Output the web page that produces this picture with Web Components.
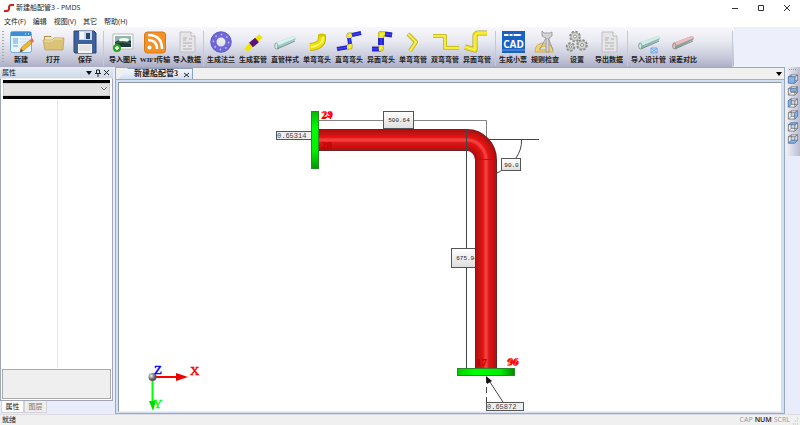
<!DOCTYPE html>
<html lang="zh-CN">
<head>
<meta charset="utf-8">
<title>新建船配管3 - PMDS</title>
<style>
html,body{margin:0;height:100%}
body{font:7px/10px "Open Sans","Noto Sans CJK SC",sans-serif;color:#222;background:#e9ecfb;overflow:hidden}
</style>
</head>
<body>
<pmds-app></pmds-app>
<script>
const base = `<style>*{box-sizing:border-box}button{font:inherit;color:inherit;border:0;background:none;padding:0;margin:0}svg{display:block}</style>`;
function define(name, html, setup) {
  customElements.define(name, class extends HTMLElement {
    constructor() {
      super();
      const t = document.createElement('template');
      t.innerHTML = base + html;
      this.attachShadow({mode: 'open'}).append(t.content.cloneNode(true));
    }
    connectedCallback() { if (setup) setup(this, this.shadowRoot); }
  });
}

const pipe = (d, w, edge, mid, hi) =>
  `<g fill="none" stroke-linejoin="round"><path d="${d}" stroke="${edge}" stroke-width="${w}"/><path d="${d}" stroke="${mid}" stroke-width="${w-1}"/><path d="${d}" stroke="${hi}" stroke-width="1"/></g>`;
const yellow = (d, w = 4) => pipe(d, w, '#aaa02a', '#e9df20', '#fff86a');
const blue = (d, w = 4) => pipe(d, w, '#3030a0', '#2222dd', '#4a4aff');
const doc = `<path d="M4 1h11l4 4v16H4z" fill="#e6e6e8" stroke="#bfbfc2"/><path d="M15 1v4h4" fill="#fafafa" stroke="#bbb"/><path d="M7 7h4M7 9h3M13 8h3M7 12h9M7 15h3M12 15h4M7 18h9" stroke="#b0b0b2"/>`;
const gear = (x, y, r) => `<circle cx="${x}" cy="${y}" r="${r}" fill="none" stroke="#8a8a88" stroke-width="2.500" stroke-dasharray="2.200 1.300"/><circle cx="${x}" cy="${y}" r="${r-.5}" fill="#d8d8d4" stroke="#a5a5a0" stroke-width=".8"/><circle cx="${x}" cy="${y}" r="${r/3}" fill="#fff" stroke="#777" stroke-width=".8"/>`;
const tube = (face, side) => `<path d="M1 12L20 5q3 1 1 4L3 18q-3-2-2-6z" fill="${side}"/><path d="M1 12L20 5q2 0 2 2L3 15z" fill="${face}"/><ellipse cx="2.300" cy="15" rx="1.600" ry="3" fill="${face}" stroke="#6d8583" stroke-width=".7"/><path d="M3 18L21 10" stroke="#76908d"/>`;
const icons = {
  new: `<rect x=".5" y=".5" width="21" height="21" rx="2" fill="#e8f4fc" stroke="#75aadb"/><path d="M1 1h20v4H1z" fill="#3e8dd3"/><path d="M15 3h1M18 3h1" stroke="#fff"/><path d="M3 8h5M3 10h5M3 12h5M3 15h5" stroke="#5ba6df"/><path d="M10 8h9M10 11h8M10 14h6" stroke="#c5dff1"/><path d="M10 21l1-4 9-8 2 3-9 8z" fill="#f6b62c" stroke="#b37516" stroke-width=".6"/><path d="M20 9l2-2 2 3-2 2z" fill="#e5675b"/><path d="M10 21l1-3 2 2z" fill="#444"/>`,
  open: `<path d="M2 5h7l1 2h10v12H3z" fill="#b08b42"/><path d="M3 6h16v11H3z" fill="#efe8ca"/><path d="M1 9h9l2-2h10l-1 12H3z" fill="#dbc277" stroke="#b99c52" stroke-width=".7"/><path d="M2 10h8l2-2h8" stroke="#f5e7af" fill="none"/>`,
  save: `<path d="M0 0h20l2 2v20H1L0 21z" fill="#3f629c" stroke="#27426f"/><path d="M5 0h13v9H5z" fill="#cbd7e6"/><path d="M12 2h4v6h-4z" fill="#294573"/><path d="M6 1h4v7H6z" fill="#f3f6fa"/><path d="M4 13h14v9H4z" fill="#f5f5f5"/><path d="M5 15h12M5 17h12M5 19h12" stroke="#bbb" stroke-width=".6"/>`,
  image: `<path d="M1 3h20v15H1z" fill="#fff" stroke="#bbb"/><path d="M3 5h16v11H3z" fill="#183a40"/><path d="M3 5h16v5q-8-4-16 1z" fill="#8eb6b3"/><ellipse cx="12" cy="9" rx="5" ry="2" fill="#f4fbe5"/><path d="M3 12q7-4 16 0v1q-9-3-16 0" fill="#496952"/><circle cx="5" cy="17" r="4" fill="#29a51d"/><path d="M3 17h4M5 15v4" stroke="#fff" stroke-width="1.500"/>`,
  wifi: `<rect x=".5" y="1" width="21" height="21" rx="3" fill="#f39124" stroke="#d77a15"/><circle cx="5.500" cy="16.500" r="2" fill="#fff"/><path d="M4 9q9 0 9 9M4 4q14 0 14 14" fill="none" stroke="#fff" stroke-width="2.600"/>`,
  data: doc, export: doc,
  flange: `<circle cx="11" cy="11" r="7.500" fill="none" stroke="#7068d8" stroke-width="6"/><circle cx="11" cy="11" r="10.300" fill="none" stroke="#554dbb" stroke-width=".6"/><circle cx="11" cy="11" r="7.600" fill="none" stroke="#c8c5ff" stroke-width="1.500" stroke-dasharray="1.500 4.400"/>`,
  sleeve: `<path d="M4 19L19 5" stroke="#eee600" stroke-width="5"/><path d="M9 14l6-5" stroke="#5a157b" stroke-width="6"/>`,
  tube: tube('#d8f3ee', '#9dc9c3'),
  elbow: `<path d="M16 4v3q0 8-12 9" fill="none" stroke="#b7a900" stroke-width="8"/><path d="M16 4v3q0 8-12 9" fill="none" stroke="#ede000" stroke-width="6.500"/><path d="M17 4v3q0 7-12 9" fill="none" stroke="#fff66c" stroke-width="2"/><ellipse cx="16" cy="4" rx="4" ry="1.500" fill="#d3c700"/>`,
  elbow2: blue('M-1 18L11 16') + yellow('M9 16h3v-3', 5) + blue('M12 13L11 6') + yellow('M11 7V4h3', 5) + blue('M14 4l9-2'),
  elbow3: blue('M2 18h9', 5) + yellow('M9 18h2v-4', 5) + blue('M11 14V6', 6) + yellow('M11 7V3h4', 6) + blue('M15 3l7 1', 5),
  bend: yellow('M6 3l8 8-6 9'),
  bend2: yellow('M-1 5h12v12h14', 4),
  bend3: yellow('M-1 16l10 3V5q0-3 4-3h8', 5),
  cad: `<path d="M0 0h23v22H0z" fill="#1b61c2"/><path d="M2 3h16l2 1-2 1H2z" fill="#fff"/><path d="M7 3v2M11 3v2" stroke="#1b61c2"/><path d="M0 19h23" stroke="#699ee3"/><text x="11.500" y="17" text-anchor="middle" font-family="Open Sans,sans-serif" font-size="10" fill="#fff">CAD</text>`,
  check: `<path fill-rule="evenodd" d="M1 21q0-9 9-9t9 9zM5 19h10q-1-4-5-4t-5 4z" fill="#f3d36b" stroke="#c29d39" stroke-width=".7"/><path d="M8 0l2 2h6l2-1v4l-3 2v14h-3V7L8 5z" fill="#d5d5d5" stroke="#888" stroke-width=".7"/><path d="M12 7L6 18M14 7l5 12" stroke="#999"/>`,
  settings: gear(9, 5.5, 4.5) + gear(4.5, 16, 3.5) + gear(16, 14, 4.5),
  design: tube('#cfeee8', '#8db9b1') + `<path d="M13 17h6v5h-6zM13 17l6 5M19 17l-6 5" fill="#c2ddfc" stroke="#73a7e8"/>`,
  error: tube('#f3b9bc', '#83a29b')
};

define('tool-button', `<style>
:host{display:block;flex:0 0 32px;font:bold 7px/9px "Liberation Serif","Noto Sans CJK SC",serif;color:#222}
:host([wide]){flex-basis:34px}
button{width:100%;display:flex;flex-direction:column;align-items:center;gap:3px;white-space:nowrap}
svg{width:22px;height:22px;overflow:visible}
</style><button type="button"><svg viewBox="0 0 22 22" aria-hidden="true"></svg><span><slot></slot></span></button>`,
(h, s) => { s.querySelector('svg').innerHTML = icons[h.getAttribute('icon')]; });

define('tool-group', `<style>
:host{display:flex;align-items:flex-start;padding-right:2px;border-right:1px solid #c6c8d5;height:35px}
</style><slot></slot>`);

define('tool-bar', `<style>
:host{display:flex;height:40px;background:#edf0fb}
.bar{flex:0 1 734px;display:flex;gap:1px;padding:4px 1px 0 2px;background:linear-gradient(#f8f8fb,#e9eaf2 35%,#c8cadb 75%,#adaec6);border-radius:0 0 3px 0}
.grip{width:2px;height:32px;background:repeating-linear-gradient(#aaa 0 1px,transparent 1px 3px)}
tool-group:nth-of-type(2){padding-left:2px;padding-right:0}
tool-group:last-child{flex:1;padding-left:2px}
</style><div class="bar" role="toolbar"><span class="grip"></span>
<tool-group><tool-button icon="new">新建</tool-button><tool-button icon="open">打开</tool-button><tool-button icon="save">保存</tool-button></tool-group>
<tool-group><tool-button icon="image">导入图片</tool-button><tool-button icon="wifi">WIFI传输</tool-button><tool-button icon="data">导入数据</tool-button></tool-group>
<tool-group><tool-button icon="flange">生成法兰</tool-button><tool-button icon="sleeve">生成套管</tool-button><tool-button icon="tube">直管样式</tool-button><tool-button icon="elbow">单弯弯头</tool-button><tool-button icon="elbow2">直弯弯头</tool-button><tool-button icon="elbow3">异面弯头</tool-button><tool-button icon="bend">单弯弯管</tool-button><tool-button icon="bend2">双弯弯管</tool-button><tool-button icon="bend3">异面弯管</tool-button></tool-group>
<tool-group><tool-button icon="cad">生成小票</tool-button><tool-button icon="check">规则检查</tool-button><tool-button icon="settings">设置</tool-button><tool-button icon="export">导出数据</tool-button></tool-group>
<tool-group><tool-button wide icon="design">导入设计管</tool-button><tool-button wide icon="error">误差对比</tool-button></tool-group>
</div>`);

define('title-bar', `<style>
:host{display:flex;align-items:center;height:15px;padding:0 8px 0 4px;background:#fff;gap:2px}
.t{flex:1}.w{display:flex;gap:16px}
</style><svg width="10" height="9"><path d="M0 8h3q2 0 2-3t2-3h3" fill="none" stroke="#c22" stroke-width="2"/></svg><span class="t">新建船配管3 - PMDS</span>
<span class="w"><button aria-label="最小化"><svg width="10" height="8"><path d="M2 4.500h6" stroke="#333"/></svg></button><button aria-label="最大化"><svg width="10" height="8"><path d="M2.500 1.500h5v5h-5z" fill="none" stroke="#333"/></svg></button><button aria-label="关闭"><svg width="10" height="8"><path d="M2 1l6 6M8 1L2 7" stroke="#333"/></svg></button></span>`);

define('menu-bar', `<style>
:host{display:flex;gap:7px;height:12px;padding:1px 0 0 4px;background:#fff;align-items:center}
</style><button>文件(F)</button><button>编辑</button><button>视图(V)</button><button>其它</button><button>帮助(H)</button>`);

define('property-panel', `<style>
:host{display:flex;flex-direction:column;flex:0 0 113px;min-height:0}
header{height:11px;display:flex;align-items:center;padding:0 2px;background:linear-gradient(#e5ecf6,#ccd8e9)}
header span{flex:1}header button{width:9px;height:9px}
.body{flex:1;display:flex;flex-direction:column;border:1px solid #a3a7b4;border-top-color:#eee;background:#fff;padding:1px 1px 1px;gap:1px;min-height:0}
.combo{border-top:3px solid #000;border-bottom:3px solid #000;background:#e2e2e2;height:19px;position:relative;flex:none;margin:0 1px}
select{appearance:none;width:100%;height:13px;border:1px solid #ccc;background:transparent;font:inherit;display:block}
.combo svg{position:absolute;right:3px;top:4px;pointer-events:none}
.grid{flex:1;display:grid;grid-template-columns:1fr 1fr}.grid div+div{border-left:1px solid #e6e6e6}
.desc{height:30px;background:#efefef;border:1px solid #aaa}
nav{display:flex;height:12px;padding-left:1px;margin-bottom:1px}
nav button{width:23px;background:#eee;color:#777;border:1px solid #d4d4d8;border-top:0}nav .on{background:#fff;color:#111}
</style><header><span>属性</span><button aria-label="菜单"><svg width="9" height="9"><path d="M2 3h6l-3 4z" fill="#111"/></svg></button><button aria-label="固定"><svg width="9" height="9"><path d="M3.500 5V2h3v3M2 5.500h6M5 6v3" fill="none" stroke="#222"/></svg></button><button aria-label="关闭"><svg width="9" height="9"><path d="M2 2l5 5M7 2L2 7" stroke="#222"/></svg></button></header>
<div class="body"><div class="combo"><select aria-label="对象"><option></option></select><svg width="6" height="4"><path d="M0 0l3 3 3-3" fill="none" stroke="#777"/></svg></div><div class="grid"><div></div><div></div></div><div class="desc"></div></div>
<nav><button class="on">属性</button><button>图层</button></nav>`);

const main = 'M318 140H467A19 20 0 0 1 486 160V368';
const layers = [[22,'#6a2424'],[20,'#c40a0a'],[17,'#942020'],[15,'#e00808'],[11,'#a52626'],[9,'#ee0c0c'],[5,'#c23030'],[3,'#ff3838']];
define('model-canvas', `<style>
:host{display:block;flex:1;min-height:0;background:#fff;border:1px solid #8f97a2;border-right-color:#ddd;border-bottom-color:#eee;overflow:hidden}
svg{width:100%;height:100%}
.d{fill:none;stroke:#444}.b{fill:url(#box);stroke:#555}
.n{font:6px "Liberation Mono",monospace;fill:#222;text-anchor:middle}
.v{font:7px "Liberation Mono",monospace;fill:#444}
.r{font:bold 11px "Liberation Serif",serif;fill:red}
.m{fill:#c00000}
.a{font:13px "Liberation Serif",serif;stroke-width:.5}
</style><svg viewBox="119 83 662 328" preserveAspectRatio="xMinYMin meet">
<defs><linearGradient id="box" x2="0" y2="1"><stop stop-color="#fff"/><stop offset="1" stop-color="#dedede"/></linearGradient>
<linearGradient id="gv" x2="0" y2="1"><stop stop-color="#0b0"/><stop offset=".3" stop-color="#0f0"/><stop offset=".7" stop-color="#0e0"/><stop offset="1" stop-color="#090"/></linearGradient>
<linearGradient id="gh"><stop stop-color="#0c0"/><stop offset=".3" stop-color="#0f0"/><stop offset=".75" stop-color="#0e0"/><stop offset="1" stop-color="#080"/></linearGradient>
<radialGradient id="ball" cx=".35" cy=".35"><stop stop-color="#eee"/><stop offset="1" stop-color="#555"/></radialGradient></defs>
<path class="d" d="M318 120.500H486.500V137" stroke-opacity=".65"/><path class="d" d="M466.500 129V368"/>
<rect class="b" x="451.500" y="248.500" width="28" height="19"/><text class="n" x="467" y="260">675.94</text>
<g fill="none">${layers.map(l => `<path d="${main}" stroke="${l[1]}" stroke-width="${l[0]}"/>`).join('')}</g>
<path class="d" d="M466.500 129V151M475 159.500H497M486 139.500H539M521.500 140Q522 149 516 158M497 173Q500 172 503 169"/>
<rect class="b" x="383.500" y="111.500" width="30" height="17"/><text class="n" x="399" y="122">500.64</text>
<rect class="b" x="501.500" y="158.500" width="19" height="12"/><text class="n" x="511.500" y="167">90.0</text>
<rect x="276.500" y="131.500" width="36" height="8" fill="#eee" stroke="#555"/><text class="v" x="277" y="138">0.65314</text>
<rect x="311.500" y="111.500" width="7" height="57" fill="url(#gv)" stroke="#278a27"/>
<text class="r" x="321" y="119">24</text><text class="r" x="322" y="118">29</text>
<text class="r m" x="321" y="149">28</text>
<text class="r m" x="476" y="366">17</text><text class="r" x="507" y="366">96</text><text class="r" x="508" y="365">96</text>
<rect x="457.500" y="368.500" width="57" height="7" fill="url(#gh)" stroke="#278a27"/>
<path class="d" d="M486.500 377V402" stroke-dasharray="6 4"/><path class="d" d="M488 379L503 402"/><path d="M486 376l6 5-5 3z" fill="#111"/>
<rect x="486.500" y="402.500" width="37" height="8" fill="#eee" stroke="#555"/><text class="v" x="487" y="409">0.65872</text>
<path d="M153 377h24" stroke="red" stroke-width="2"/><path d="M176 373l12 4-12 4z" fill="#e00"/>
<path d="M152.500 378v24" stroke="#0f0" stroke-width="2"/><path d="M149 401h7l-3 10z" fill="#0d0"/>
<circle cx="152.500" cy="377" r="4" fill="url(#ball)"/>
<text class="a" x="154" y="374" fill="#00f" stroke="#00f">Z</text><text class="a" x="190" y="375" fill="red" stroke="red">X</text><text class="a" x="153" y="408" fill="#0f0" stroke="#0f0">Y</text>
</svg>`);

define('document-view', `<style>
:host{display:flex;flex-direction:column;flex:1;min-width:0;border:1px solid #9ba9c0;background:#f0f0f0}
.tabs{display:flex;height:11px;align-items:stretch;justify-content:space-between;padding-right:2px}
.tab{display:flex;align-items:center;background:linear-gradient(#f4f8fe,#d2dff4);border:1px solid #8ca0c0;border-width:1px 1px 0 0;padding:0 2px 0 18px;gap:5px;font:bold 8px/10px "Liberation Serif","Noto Sans CJK SC",serif;clip-path:polygon(12px 0,100% 0,100% 100%,2px 100%)}
.frame{flex:1;min-height:0;display:flex;padding:2px 2px 1px;background:#d3dff2;border-top:1px solid #9cafd0}
</style><div class="tabs"><div class="tab"><span>新建船配管3</span><button aria-label="关闭"><svg width="7" height="7"><path d="M1 2l5 4M6 2L1 6" stroke="#222"/></svg></button></div><button aria-label="文档列表"><svg width="6" height="6"><path d="M0 1h6L3 5z"/></svg></button></div>
<div class="frame"><model-canvas></model-canvas></div>`);

const faces = ['M1 4h7v7H1z','M3 4h7v3H3z','M1 4l3-2v6l-3 3z','M8 4l3-2v6l-3 3z','M1 4l3-2h7L8 4z','M1 11l3-3h7l-3 3z'];
define('view-strip', `<style>
:host{display:flex;flex-direction:column;align-items:center;flex:0 0 14px;align-self:flex-start;padding-top:2px;gap:1px;background:linear-gradient(90deg,#f0f0f8,#babdd2);height:89px}
i{width:8px;height:3px;background:repeating-linear-gradient(90deg,#999 0 1px,transparent 1px 2px) 0 0/8px 1px no-repeat}
button{height:11px}svg{width:12px;height:11px}
</style><i></i>` + faces.map((f, i) => `<button aria-label="视图 ${i + 1}"><svg viewBox="0 0 12 12"><path d="M1 4h7v7H1zM1 4l3-2h7L8 4M11 2v6l-3 3M4 2v6h7M4 8l-3 3" fill="#f4f4f4" stroke="#666" stroke-width=".8"/><path d="${f}" fill="#83b6ee" stroke="#557ba5" stroke-width=".8"/></svg></button>`).join(''));

define('status-bar', `<style>
:host{display:flex;height:11px;background:#f0f0f0;align-items:center;padding:0 1px 0 2px;border-top:1px solid #dcdce2}
.s{flex:1}b,.k span{font-size:7px}.k{display:flex;gap:2px;color:#999}b{color:#222;font-weight:600}
</style><span class="s">就绪</span><span class="k"><span>CAP</span><b>NUM</b><span>SCRL</span></span><svg width="9" height="9"><path d="M7 2h1M5 5h3M3 8h5" stroke="#bbb" stroke-dasharray="1 1"/></svg>`);

define('pmds-app', `<style>
:host{display:flex;flex-direction:column;height:100vh}
main{flex:1;display:flex;min-height:0;gap:2px;background:#e9ecfb}
document-view{margin-right:-1px}
</style><title-bar></title-bar><menu-bar></menu-bar><tool-bar></tool-bar><main><property-panel></property-panel><document-view></document-view><view-strip></view-strip></main><status-bar></status-bar>`);
</script>
</body>
</html>
